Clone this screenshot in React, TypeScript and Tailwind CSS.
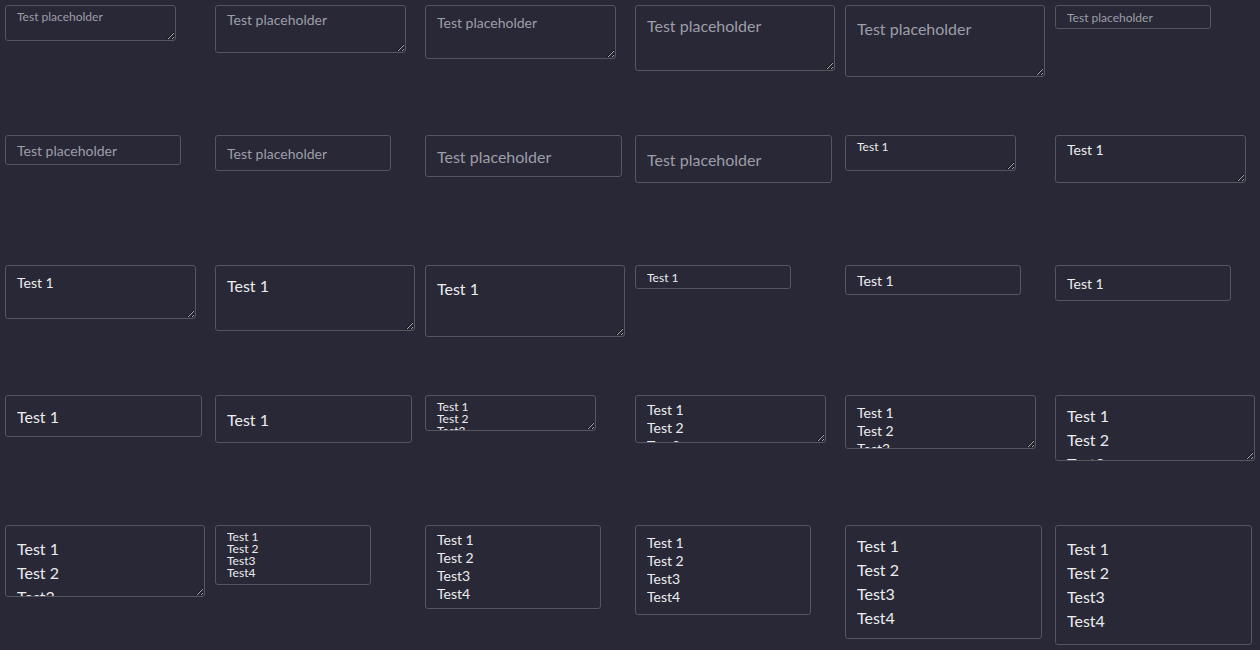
import React from "react"

type Size = "s" | "m1" | "m2" | "l1" | "l2"

const sizeClass: Record<Size, string> = {
  s: "text-[12px] leading-[12px] py-[5px]",
  m1: "text-[14px] leading-[18px] py-[5px]",
  m2: "text-[14px] leading-[18px] py-[8px]",
  l1: "text-[16px] leading-[24px] py-[8px]",
  l2: "text-[16px] leading-[24px] py-[11px]",
}

const areaSize: Record<Size, string> = {
  s: "w-[171px] h-[36px]",
  m1: "w-[191px] h-[48px]",
  m2: "w-[191px] h-[54px]",
  l1: "w-[200px] h-[66px]",
  l2: "w-[200px] h-[72px]",
}

const inputSize: Record<Size, string> = {
  s: "w-[156px] h-[24px]",
  m1: "w-[176px] h-[30px]",
  m2: "w-[176px] h-[36px]",
  l1: "w-[197px] h-[42px]",
  l2: "w-[197px] h-[48px]",
}

const multiSize: Record<Size, string> = {
  s: "w-[156px] h-[60px]",
  m1: "w-[176px] h-[84px]",
  m2: "w-[176px] h-[90px]",
  l1: "w-[197px] h-[114px]",
  l2: "w-[197px] h-[120px]",
}

const sizes: Size[] = ["s", "m1", "m2", "l1", "l2"]

const base =
  "block m-[5px] px-[11px] bg-[#282836] text-[#ececef] placeholder:text-[#9e9ea8] border border-[#56565f] rounded-[3px] outline-none [color-scheme:dark] font-['Lato',sans-serif]"

export default function App() {
  return (
    <div className="w-[1260px] h-[650px] bg-[#282836] grid grid-cols-[repeat(6,210px)] auto-rows-[130px] items-start overflow-hidden">
      {sizes.map((s) => (
        <textarea key={"tp" + s} rows={2} placeholder="Test placeholder" className={`${base} ${sizeClass[s]} ${areaSize[s]} resize overflow-hidden`} />
      ))}
      {sizes.map((s) => (
        <input key={"ip" + s} placeholder="Test placeholder" className={`${base} ${sizeClass[s]} ${inputSize[s]}`} />
      ))}
      {sizes.map((s) => (
        <textarea key={"tv" + s} rows={2} defaultValue="Test 1" className={`${base} ${sizeClass[s]} ${areaSize[s]} resize overflow-hidden`} />
      ))}
      {sizes.map((s) => (
        <input key={"iv" + s} defaultValue="Test 1" className={`${base} ${sizeClass[s]} ${inputSize[s]}`} />
      ))}
      {sizes.map((s) => (
        <textarea key={"t3" + s} rows={2} defaultValue={"Test 1\nTest 2\nTest3"} className={`${base} ${sizeClass[s]} ${areaSize[s]} resize overflow-hidden`} />
      ))}
      {sizes.map((s) => (
        <textarea key={"t4" + s} rows={4} defaultValue={"Test 1\nTest 2\nTest3\nTest4"} className={`${base} ${sizeClass[s]} ${multiSize[s]} resize-none overflow-hidden`} />
      ))}
    </div>
  )
}
